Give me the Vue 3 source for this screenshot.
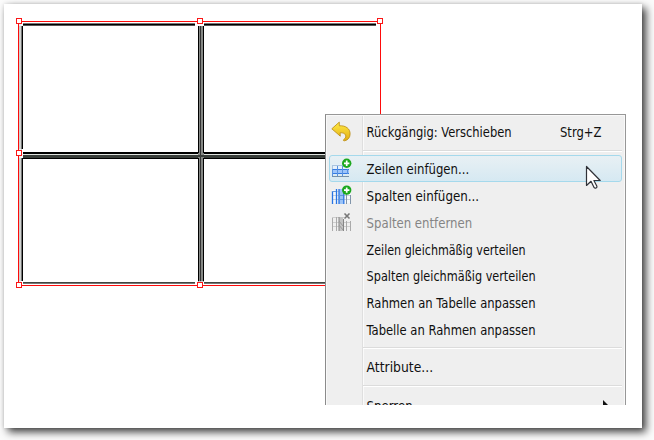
<script setup>
const items = [
  { label: 'Rückgängig: Verschieben', key: 'Strg+Z', icon: 'undo', w: 145, cls: 'first' },
  { sep: true, cls: 's1' },
  { label: 'Zeilen einfügen...', icon: 'rows', w: 102.5, cls: 'hover' },
  { label: 'Spalten einfügen...', icon: 'cols', w: 112.5 },
  { label: 'Spalten entfernen', icon: 'remove', w: 105.5, cls: 'disabled' },
  { label: 'Zeilen gleichmäßig verteilen', w: 159 },
  { label: 'Spalten gleichmäßig verteilen', w: 169 },
  { label: 'Rahmen an Tabelle anpassen', w: 169 },
  { label: 'Tabelle an Rahmen anpassen', w: 169 },
  { sep: true, cls: 's2' },
  { label: 'Attribute...', w: 66.5, cls: 'attr' },
  { sep: true, cls: 's3' },
  { label: 'Sperren', w: 46, sub: true, cls: 'last' },
]
const handles = [[19, 21], [200, 21], [380, 21], [19, 153], [19, 285], [200, 285]]
</script>

<template>
  <div class="page">
    <main class="paper">
      <svg class="table" width="380" height="290" viewBox="0 0 380 290" shape-rendering="crispEdges">
        <g transform="translate(-4 -4)">
          <path d="M19 24h2v258h-2z" fill="#d0d2d0" />
          <path d="M21 26h1v124h-1zM21 158h1v123h-1z" fill="#777" />
          <path d="M22 26h1v123h-1zM22 158h1v123h-1z" fill="#000" />
          <path d="M23 23h172v1H23zM204 23h172v1H204z" fill="#777" />
          <path d="M23 24h172v1H23zM204 24h172v1H204z" fill="#000" />
          <path d="M23 25h172v1H23zM204 25h172v1H204z" fill="#555" />
          <path d="M23 152h353v2H23z" fill="#000" />
          <path d="M22 154h354v1H22z" fill="#dfe3df" />
          <path d="M23 155h353v3H23z" fill="#383d39" />
          <path d="M23 158h353v1H23z" fill="#000" />
          <path d="M23 282h172v1H23zM204 282h172v1H204z" fill="#404640" />
          <path d="M23 283h172v1H23zM204 283h172v1H204z" fill="#777" />
          <path d="M198 26h6v256h-6z" fill="#858885" />
          <path d="M198 26h1v127h-1zM203 26h1v127h-1zM198 158h1v124h-1zM203 158h1v124h-1z" fill="#000" />
          <path d="M200 26h1v256h-1z" fill="#333" />
          <path d="M198 155h6v2h-6z" fill="#383d39" />
          <g v-for="(h, i) in handles" :key="'halo' + i">
            <rect :x="h[0] - 4" :y="h[1] - 4" width="8" height="9" fill="#fff" fill-opacity=".65" />
          </g>
          <g fill="#fe0b0b">
            <rect x="18" y="21" width="363" height="1" />
            <rect x="18" y="285" width="363" height="1" />
            <rect x="18" y="21" width="1" height="265" />
            <rect x="380" y="21" width="1" height="265" />
          </g>
          <g v-for="(h, i) in handles" :key="i">
            <rect :x="h[0] - 3" :y="h[1] - 3" width="6" height="6" fill="#fb1616" />
            <rect :x="h[0] - 2" :y="h[1] - 2" width="4" height="4" fill="#fff" />
          </g>
        </g>
      </svg>

      <nav class="menu">
        <template v-for="(it, i) in items" :key="i">
          <div v-if="it.sep" class="sep" :class="it.cls"></div>
          <div v-else class="item" :class="it.cls">
            <span class="icon">
              <svg v-if="it.icon === 'undo'" width="22" height="22" viewBox="0 0 22 22">
                <defs>
                  <linearGradient id="gold" x1="0" y1="0" x2="0" y2="1">
                    <stop offset="0" stop-color="#ffea46" />
                    <stop offset="1" stop-color="#e2ae12" />
                  </linearGradient>
                </defs>
                <path d="M.8 7.800 8.300 1.100v3.700C14.800 4.300 19.200 7.800 19.100 12.900c0 3.500-2 6.100-5.400 6.900-1.400.2-1.800-.8-.7-1.500 1.900-1.400 2.200-3 1.400-4.500-.9-1.600-2.800-2.200-5.300-2l.2 3.400z" fill="url(#gold)" stroke="#b98a10" stroke-width=".8" stroke-linejoin="round" />
              </svg>
              <svg v-if="it.icon === 'rows'" width="22" height="22" viewBox="0 0 22 22">
                <path d="M1 6.500h13v5H1z" fill="#e6f1fc" />
                <path d="M1 7.500h12M1.500 7v4M6.500 7v4M11.500 7v4" stroke="#a9c4de" fill="none" />
                <path d="M1 11h17v5H1z" fill="#9cc4fa" />
                <path d="M1 11.500h17M1 15.500h17" stroke="#347be4" fill="none" />
                <path d="M1.500 11v8M6.500 8v11M11.500 8v11M16.500 11v5" stroke="#5992df" fill="none" />
                <path d="M1 18.500h17" stroke="#7590a9" />
                <circle cx="15.700" cy="5.300" r="4.700" fill="#1ca81e" />
                <path d="M15.700 2.600V8M13 5.300h5.400" stroke="#fff" stroke-width="1.700" />
              </svg>
              <svg v-if="it.icon === 'cols'" width="22" height="22" viewBox="0 0 22 22">
                <path d="M1 5h19v13H1z" fill="#f5f8fb" />
                <path d="M1 6.500h13M1 10.500h19M1 14.500h19" stroke="#c7d2dd" fill="none" />
                <path d="M8 4h4.500v15H8z" fill="#9bc3f7" />
                <path d="M1.500 6v13M5.500 4v15M8 4v15M12.800 4v15" stroke="#2874e4" fill="none" stroke-width="1.300" />
                <path d="M15.500 9v10M19.500 10v9" stroke="#8195aa" fill="none" />
                <path d="M8 10.500h4M8 14.500h4M1 6.500h4" stroke="#6498dd" />
                <circle cx="15.700" cy="5.100" r="4.700" fill="#1ca81e" />
                <path d="M15.700 2.400v5.400M13 5.100h5.400" stroke="#fff" stroke-width="1.700" />
              </svg>
              <svg v-if="it.icon === 'remove'" width="22" height="22" viewBox="0 0 22 22">
                <path d="M1 5.500h12M1 10.500h19M1 14.500h19" stroke="#cdcdcd" fill="none" />
                <path d="M8 5h4v14H8z" fill="#c3c3c3" />
                <path d="M1.500 6v13M5.500 5v14M15.500 9v10M19.500 9v10" stroke="#aaa" fill="none" />
                <path d="M8 5v14M12.500 7v12" stroke="#858585" />
                <path d="M8 9l4 5M8 13l4 5" stroke="#999" />
                <path d="M13.500 1.500l5 5M18.500 1.500l-5 5" stroke="#777" stroke-width="1.600" />
              </svg>
            </span>
            <svg class="label" :width="it.w + 3" height="20">
              <text x=".6" y="15.900" :textLength="it.w" lengthAdjust="spacingAndGlyphs">{{ it.label }}</text>
            </svg>
            <svg v-if="it.key" class="key" width="44" height="20">
              <text x="0" y="15.900" textLength="41.500" lengthAdjust="spacingAndGlyphs">{{ it.key }}</text>
            </svg>
            <svg v-if="it.sub" class="arrow" width="6" height="10"><path d="M0 0l5 5-5 5z" /></svg>
          </div>
        </template>
      </nav>

      <svg class="pointer" width="18" height="26" viewBox="0 0 18 26">
        <path d="M1.500 1.500v19l4.500-4.200 3.200 6.400c1 1 3.200.2 2.700-1.500L8.900 15.500h6.300z" fill="#fff" stroke="#303238" stroke-width="1.200" stroke-linejoin="round" />
      </svg>
    </main>
  </div>
</template>

<style>
body { margin: 0; background: #fbfbfb; overflow: hidden; }
</style>
<style scoped>
.page { width: 654px; height: 440px; box-sizing: border-box; padding: 4px 12px 12px 4px; overflow: hidden; }
.paper {
  position: relative; height: 424px; background: #fff; box-sizing: border-box;
  padding: 110px 16px 0 321px;
  box-shadow: 4px 4px 8px 0 rgba(0, 0, 0, .75), 0 0 4px rgba(0, 0, 0, .12);
}
.table { position: absolute; left: 0; top: 0; }
.menu {
  position: relative; width: 301px; height: 291px; box-sizing: border-box; overflow: hidden;
  border: 1px solid #979797; border-bottom: 0; border-left-color: #8b8b8b; padding: 4px 3px 0;
  box-shadow: inset 1px 1px #f9f9f9, inset -1px 0 #f9f9f9;
  background: linear-gradient(90deg, transparent 36px, #dfdfdf 36px, #dfdfdf 37px, #fafafa 37px, #fafafa 38px, transparent 38px), #efefef;
}
.item {
  display: flex; align-items: center; height: 26.67px; box-sizing: border-box; padding-left: 1px;
  font-family: "DejaVu Sans Condensed", "DejaVu Sans", sans-serif;
  font-stretch: condensed; font-size: 13.3px; fill: #101010;
}
.icon { width: 36px; height: 24px; flex: none; padding: 2px 0 0 1px; box-sizing: border-box; }
.first .icon { padding-top: 1px; }
.icon svg, .label, .key { display: block; }
.label, .key { overflow: visible; }
.first text { transform: translateY(-.7px); }
.key { margin-left: 46px; }
.hover {
  height: 27px; border: 1px solid #a5d9ec; border-radius: 3px; padding-left: 0;
  background: linear-gradient(#e8f0f4, #d6e9f2);
}
.disabled { fill: #858585; }
.sep { height: 1px; margin-left: 34px; background: #dcdcdc; border-bottom: 1px solid #fff; }
.s1 { margin-top: 4.33px; margin-bottom: 3px; }
.s2 { margin-top: 5px; margin-bottom: 4px; }
.s3 { margin-top: 5px; margin-bottom: 5px; }
.arrow { margin-left: 188px; }
.pointer { position: absolute; left: 581px; top: 161px; }
</style>
